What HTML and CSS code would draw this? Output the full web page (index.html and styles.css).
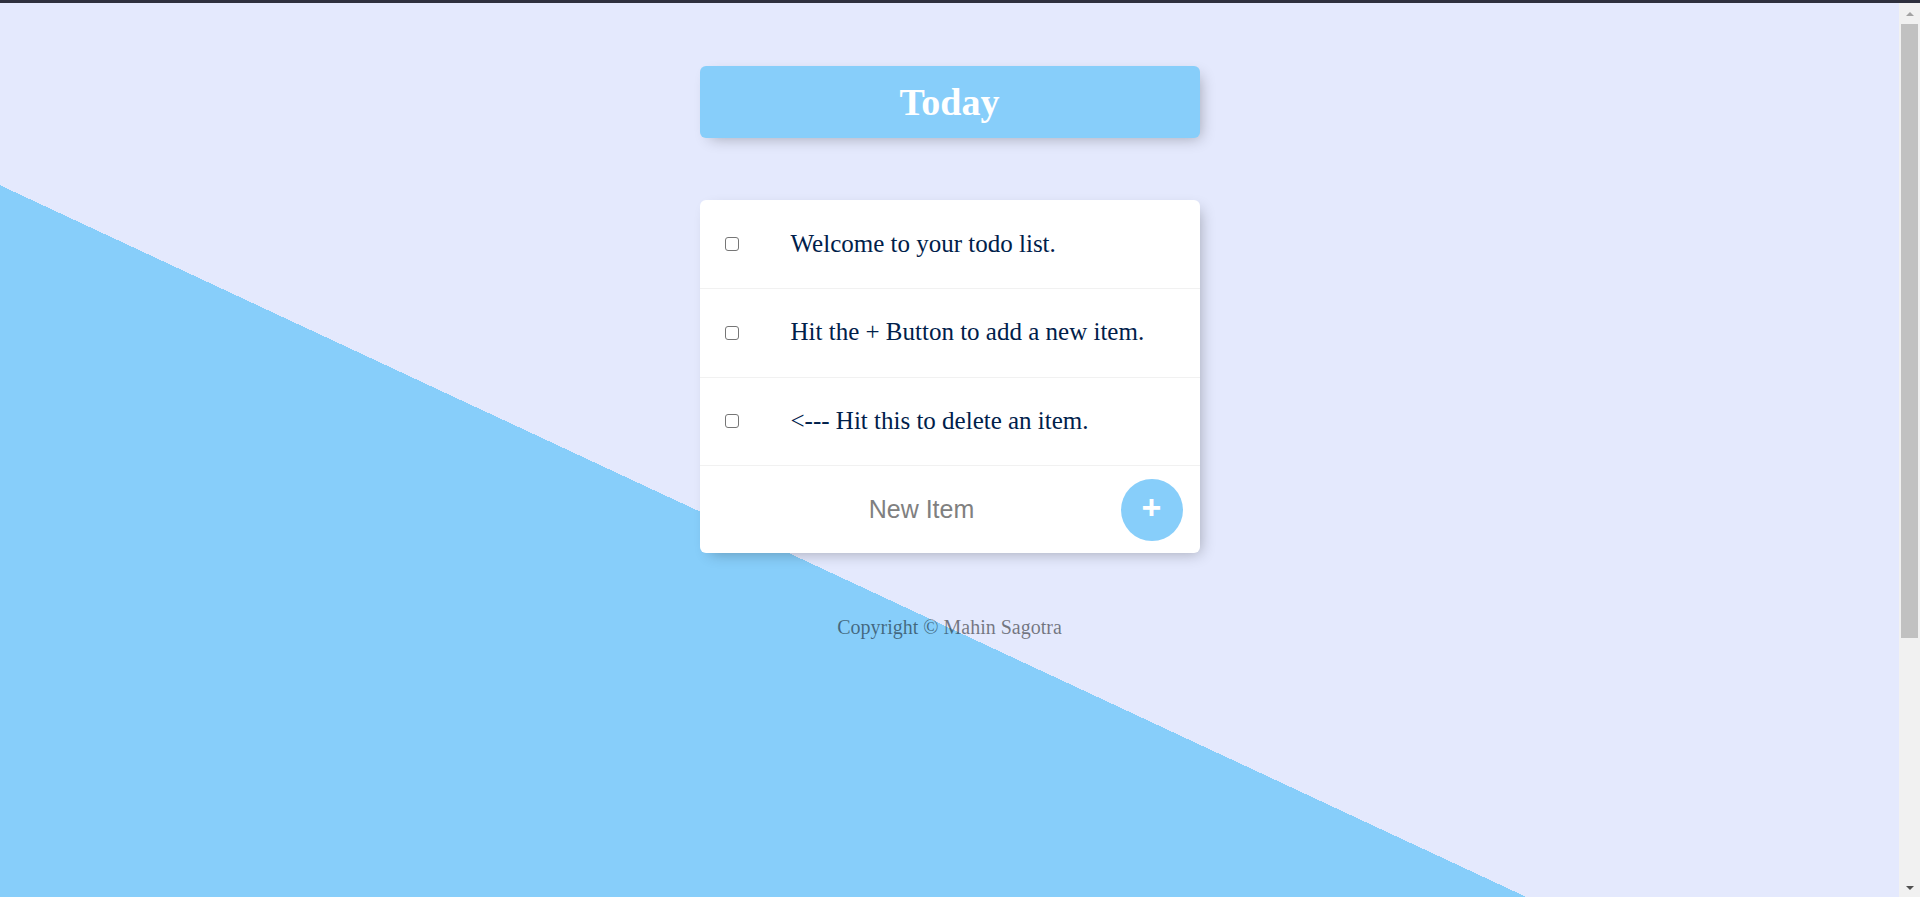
FILE: index.html
```html
<!DOCTYPE html>
<html lang="en">
<head>
<meta charset="utf-8">
<title>To-Do List</title>
<link rel="stylesheet" href="styles.css">
</head>
<body>
<div class="topbar"></div>
<div class="scrollbar" aria-hidden="true">
  <span class="sb-arrow sb-up"></span>
  <span class="sb-thumb"></span>
  <span class="sb-arrow sb-down"></span>
</div>
<main class="page">
  <div class="box heading">
    <h1>Today</h1>
  </div>
  <div class="box list">
    <div class="item">
      <input type="checkbox" class="check">
      <p class="item-text">Welcome to your todo list.</p>
    </div>
    <div class="item">
      <input type="checkbox" class="check">
      <p class="item-text">Hit the + Button to add a new item.</p>
    </div>
    <div class="item">
      <input type="checkbox" class="check">
      <p class="item-text">&lt;--- Hit this to delete an item.</p>
    </div>
    <form class="new-item" action="#">
      <input type="text" class="new-input" name="newItem" placeholder="New Item" autocomplete="off">
      <button type="button" class="add-btn">+</button>
    </form>
  </div>
</main>
<footer class="footer">Copyright © Mahin Sagotra</footer>
</body>
</html>
```
FILE: styles.css
```css
html {
  min-height: 1256px;
  background: linear-gradient(25deg, #87CEFA 50%, #E4E9FD 50%) 0 0 / 1899px 1256px no-repeat, #E4E9FD;
}

body {
  margin: 0;
  padding-right: 21px;
  font-family: "Liberation Serif", "Times New Roman", serif;
}

.topbar {
  position: fixed;
  top: 0;
  left: 0;
  right: 0;
  height: 3px;
  background: #2e303e;
  z-index: 10;
}

.scrollbar {
  position: fixed;
  top: 3px;
  right: 0;
  bottom: 0;
  width: 21px;
  background: #f1f1f1;
  display: flex;
  flex-direction: column;
  align-items: center;
  z-index: 9;
}

.sb-arrow {
  width: 0;
  height: 0;
  border-left: 4px solid transparent;
  border-right: 4px solid transparent;
  flex: none;
}

.sb-up {
  margin-top: 9px;
  border-bottom: 4px solid #a3a3a3;
}

.sb-down {
  margin-top: auto;
  margin-bottom: 7px;
  border-top: 4px solid #505050;
}

.sb-thumb {
  margin-top: 8px;
  width: 17px;
  height: 614px;
  background: #c1c1c1;
  flex: none;
}

.page {
  display: flex;
  flex-direction: column;
  align-items: center;
  gap: 62px;
  padding-top: 66px;
}

.box {
  width: 500px;
  background: #fff;
  border-radius: 6px;
  box-shadow: 5px 5px 15px -5px rgba(0, 0, 0, 0.3);
}

.heading {
  background: #87CEFA;
}

.heading h1 {
  margin: 0;
  padding: 14px 10px;
  font-size: 38px;
  line-height: 44px;
  font-weight: bold;
  color: #fff;
  text-align: center;
}

.item {
  display: flex;
  align-items: center;
  border-bottom: 1px solid #F1F1F1;
}

.check {
  appearance: none;
  -webkit-appearance: none;
  margin: 0 25px;
  width: 14px;
  height: 14px;
  flex: none;
  border: 1px solid #767676;
  border-radius: 3px;
  background: #fff;
}

.item-text {
  margin: 0;
  padding: 29.55px 24px 29.55px 27px;
  font-size: 25px;
  line-height: 28.7px;
  color: #00204a;
}

.new-item {
  display: flex;
  align-items: center;
  height: 87px;
  padding: 0 17px 0 23px;
}

.new-input {
  width: 398px;
  height: 60px;
  padding: 0;
  border: none;
  background: transparent;
  text-align: center;
  font-family: "Liberation Sans", Arial, sans-serif;
  font-size: 25px;
  color: #333;
  outline: none;
}

.new-input::placeholder {
  color: grey;
  opacity: 1;
}

.add-btn {
  width: 62px;
  height: 62px;
  flex: none;
  border: 0;
  border-radius: 50%;
  background: #87CEFA;
  color: #fff;
  font-family: "Liberation Sans", Arial, sans-serif;
  font-size: 34px;
  font-weight: bold;
  line-height: 1;
  padding: 0 0 6px;
}

.footer {
  margin-top: 63px;
  text-align: center;
  font-size: 20px;
  line-height: 23px;
  color: rgba(0, 0, 0, 0.5);
}
```
